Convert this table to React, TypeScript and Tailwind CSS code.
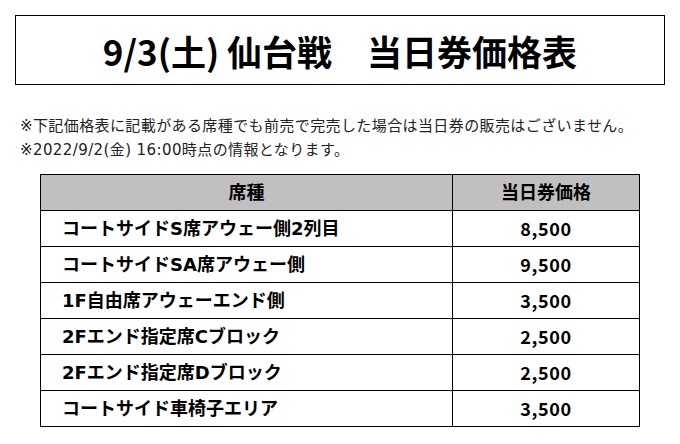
import React from "react";

const rows: [string, string][] = [
  ["コートサイドS席アウェー側2列目", "8,500"],
  ["コートサイドSA席アウェー側", "9,500"],
  ["1F自由席アウェーエンド側", "3,500"],
  ["2Fエンド指定席Cブロック", "2,500"],
  ["2Fエンド指定席Dブロック", "2,500"],
  ["コートサイド車椅子エリア", "3,500"],
];

const cjk = '"Noto Sans CJK JP", "Noto Sans", sans-serif';
const mixed = '"DejaVu Sans", "Noto Sans CJK JP", sans-serif';

export default function App() {
  return (
    <div
      className="w-[680px] h-[444px] bg-white text-black overflow-hidden"
      style={{ fontFamily: cjk }}
    >
      <div className="pt-[15px] pl-[15px]">
        <div className="w-[650px] h-[70px] border border-black flex items-center justify-center">
          <h1 className="text-[35px] font-bold leading-none">
            9/3(土) 仙台戦　当日券価格表
          </h1>
        </div>
      </div>
      <div
        className="mt-[29px] pl-[20px] text-[15px] leading-[24px] text-[#222] tracking-[0.4px]"
        style={{ fontFamily: mixed }}
      >
        <p>※下記価格表に記載がある席種でも前売で完売した場合は当日券の販売はございません。</p>
        <p>※2022/9/2(金) 16:00時点の情報となります。</p>
      </div>
      <div className="mt-[12px] pl-[40px]">
        <table
          className="w-[600px] border-collapse border border-black text-[18px] font-bold"
          style={{ fontFamily: mixed }}
        >
          <thead>
            <tr className="h-[36px] bg-[#c0c0c0]">
              <th className="w-[412px] border border-black text-center font-bold">席種</th>
              <th className="border border-black text-center font-bold">当日券価格</th>
            </tr>
          </thead>
          <tbody>
            {rows.map(([name, price]) => (
              <tr key={name} className="h-[36px]">
                <td className="border border-black pl-[21px] text-left">{name}</td>
                <td
                  className="border border-black text-center tracking-[0.6px]"
                  style={{ fontFamily: cjk }}
                >
                  {price}
                </td>
              </tr>
            ))}
          </tbody>
        </table>
      </div>
    </div>
  );
}
